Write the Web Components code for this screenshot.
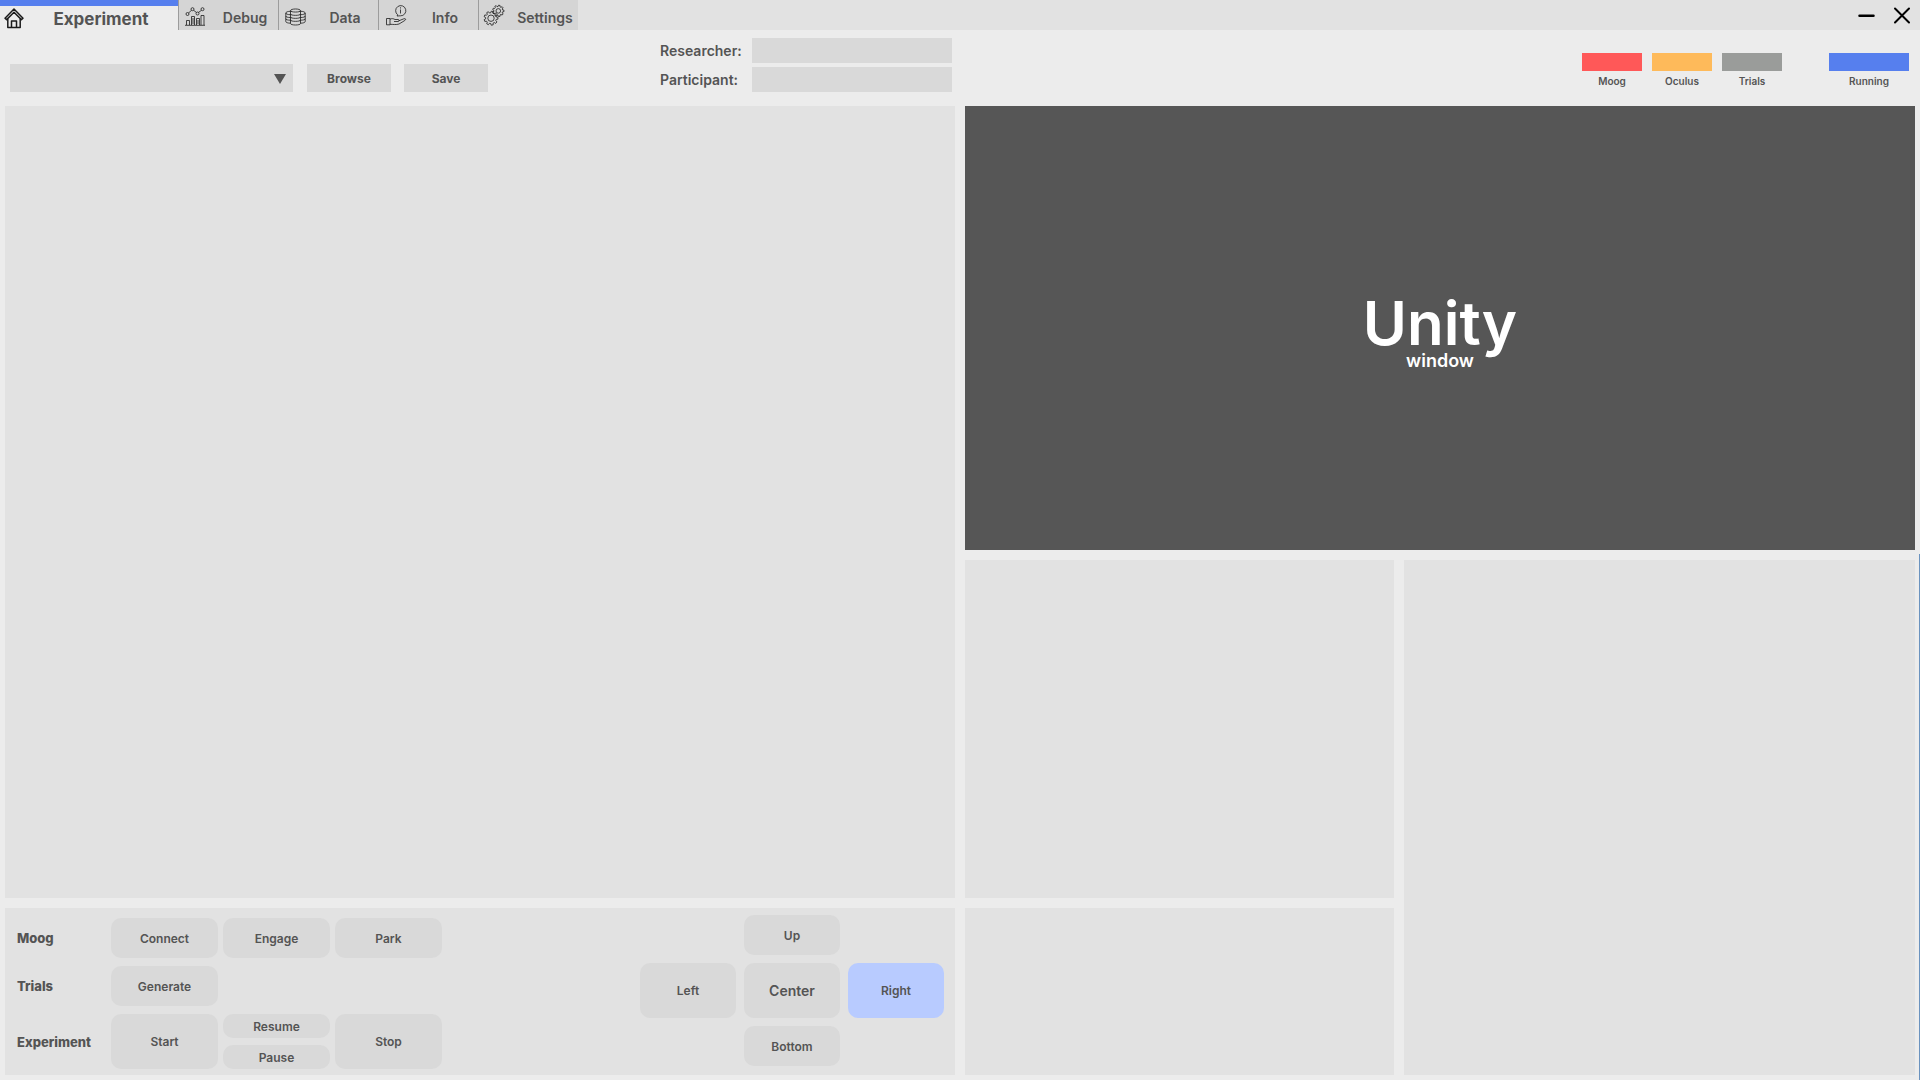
<!DOCTYPE html>
<html lang="en">
<head>
<meta charset="utf-8">
<title>Experiment</title>
<style>
html, body { margin: 0; height: 100%; }
body {
  background: #ececec;
  color: #545454;
  font-family: Inter, "Liberation Sans", sans-serif;
  font-weight: 600;
  overflow: hidden;
}
</style>
</head>
<body>
<experiment-app></experiment-app>
<script>
const define = (name, html, setup) => {
  const template = document.createElement('template');
  template.innerHTML = html;
  customElements.define(name, class extends HTMLElement {
    constructor() {
      super();
      this.attachShadow({ mode: 'open' }).append(template.content.cloneNode(true));
    }
    connectedCallback() { if (setup) setup(this, this.shadowRoot); }
  });
};

// Outline of a cog: each tooth takes one step of the circle.
const cog = (cx, cy, outer, inner, teeth) => {
  const step = 2 * Math.PI / teeth;
  const points = [];
  for (let i = 0; i < teeth; i++) {
    for (const [r, t] of [[inner, -.32], [outer, -.2], [outer, .2], [inner, .32]]) {
      const a = (i + t) * step;
      points.push((cx + r * Math.cos(a)).toFixed(2) + ' ' + (cy + r * Math.sin(a)).toFixed(2));
    }
  }
  return '<path d="M' + points.join('L') + 'Z"/>';
};

const ICONS = {
  home: '<g stroke-width="1.5" stroke-linejoin="round"><path d="M1 10.200 10 1l9 9.200-1.600 1.400L10 4.200l-7.400 7.400Z"/><path d="M3.800 10.800V19.500H16.200V10.800M7.500 19.500V13h5V19.500"/></g>',
  chart: '<g transform="translate(0 2)"><path d="M0 18.300h20M1.500 18v-4.500h3V18M6.500 18V9.500h3V18M11.500 18v-6.500h3V18M16 18V8.500h3V18M8 11v6M13 13v4"/><circle cx="2.500" cy="7" r="1.500"/><circle cx="7.500" cy="2.200" r="1.500"/><circle cx="12.500" cy="6.500" r="1.500"/><circle cx="17.500" cy="2.200" r="1.500"/><path d="M3.500 6l3-2.700M8.600 3.300l2.900 2.200M13.400 5.500l3.100-2.200"/></g>',
  data: '<g transform="translate(.5 2)"><path d="M5 3.700c0-2.300 10-2.300 10 0v12.800c0 2-10 2-10 0ZM5 3.700c0 1.800 10 1.800 10 0M5 7c0 1.800 10 1.800 10 0M5 10c0 1.800 10 1.800 10 0M5 13c0 1.800 10 1.800 10 0M5 4.300C2.500 4.300.3 5 .3 6v8.500c0 1 2.200 1.700 4.700 1.700M.3 6c0 1 2 1.700 4.700 1.700M.3 9c0 1 2 1.500 4.700 1.500M.3 11.700c0 1 2 1.500 4.700 1.500M15 4.300c2.500 0 4.700.7 4.700 1.700v8.500c0 1-2.200 1.700-4.700 1.700M19.700 6c0 1-2 1.700-4.700 1.700M19.700 9c0 1-2 1.500-4.700 1.500M19.700 11.700c0 1-2 1.500-4.700 1.500"/></g>',
  info: '<g transform="translate(1 0)"><path d="M11.700 9.800a5.100 5.100 0 1 1 2.800 1l-3.500.2ZM14.500 4.500v4M14.500 2.300v1.200M.5 13.500h3.500v6.300H.5ZM4 14.200c2-1 3.500-.5 5 .3h3c1.500 0 1.500 2 0 2H8M12.800 15.800l5-2c2-.6 2.500.7 1 1.700L13 19c-3 1-6 .3-9 .3"/></g>',
  gears: '<g transform="translate(-1 0)">' + cog(7, 13.2, 7, 5.4, 9) + cog(14.3, 5.9, 5.7, 4.4, 9) + '<circle cx="7" cy="13.200" r="3.200"/><circle cx="14.300" cy="5.900" r="2.300"/></g>'
};

define('app-icon', `
  <style>
    :host { display: block; flex: none; width: 20px; height: 21px; }
    svg { display: block; width: 100%; height: 100%; overflow: visible; fill: none; stroke: #1c1c1c; stroke-width: .8; }
  </style>
  <svg viewBox="0 0 20 21" aria-hidden="true"></svg>`,
  (host, root) => { root.querySelector('svg').innerHTML = ICONS[host.getAttribute('name')]; });

define('nav-tab', `
  <style>
    :host { display: block; width: 100px; height: 30px; }
    button {
      display: flex; align-items: flex-start; gap: 7px; box-sizing: border-box;
      width: 100%; height: 100%; margin: 0; padding: 5px 0 0 6px;
      border: 0; border-left: 1px solid #9c9c9c; background: #d5d5d5;
      color: inherit; font: inherit; font-size: 14px; line-height: 20px;
    }
    .label { flex: 1; padding-top: 3px; text-align: center; }
    :host([active]) { width: 178px; }
    :host([active]) button {
      padding: 2px 0 0 4px; gap: 0; background: #ececec;
      border-left: 0; border-top: 6px solid #567fee; font-size: 17px; font-weight: 700;
    }
    :host([active]) .label { padding-top: 1px; }
  </style>
  <button type="button"><app-icon></app-icon><span class="label"><slot></slot></span></button>`,
  (host, root) => {
    const icon = document.createElement('app-icon');
    icon.setAttribute('name', host.getAttribute('icon'));
    root.querySelector('app-icon').replaceWith(icon);
  });

define('title-bar', `
  <style>
    :host { display: flex; height: 30px; background: #e2e2e2; }
    nav { display: flex; flex: 1; }
    .window { display: flex; align-items: center; gap: 17px; padding-right: 9px; }
    button { display: flex; align-items: center; width: 18px; height: 30px; margin: 0; padding: 0; border: 0; background: none; }
    svg { display: block; width: 18px; height: 18px; stroke: #000; fill: none; stroke-linecap: round; }
  </style>
  <nav>
    <nav-tab icon="home" active>Experiment</nav-tab>
    <nav-tab icon="chart">Debug</nav-tab>
    <nav-tab icon="data">Data</nav-tab>
    <nav-tab icon="info">Info</nav-tab>
    <nav-tab icon="gears">Settings</nav-tab>
  </nav>
  <div class="window">
    <button type="button" aria-label="Minimize"><svg viewBox="0 0 18 18"><path stroke-width="2.500" d="M1.500 9.700h14"/></svg></button>
    <button type="button" aria-label="Close"><svg viewBox="0 0 18 18"><path stroke-width="2" d="M2 2.500l14 14M16 2.500l-14 14"/></svg></button>
  </div>`);

define('status-light', `
  <style>
    :host { display: block; width: 60px; text-align: center; font-size: 10px; line-height: 20px; }
    :host([wide]) { width: 80px; }
    .lamp { height: 18px; background: var(--lamp); }
  </style>
  <div class="lamp"></div><slot></slot>`);

define('tool-bar', `
  <style>
    :host { display: grid; grid-template-columns: 1fr 1fr; height: 76px; box-sizing: border-box; padding-top: 8px; }
    .left, .right { display: flex; align-items: flex-start; }
    .left { padding: 0 8px 0 10px; }
    .file { display: flex; flex: 1; padding-top: 26px; }
    .picker { position: relative; width: 283px; height: 28px; margin-right: 14px; }
    select {
      appearance: none; display: block; width: 100%; height: 100%;
      border: 0; border-radius: 0; background: #d9d9d9; font: inherit; color: inherit;
    }
    .picker svg { position: absolute; right: 7px; top: 10px; width: 12px; height: 10px; fill: #545454; pointer-events: none; }
    button {
      width: 84px; height: 28px; margin: 0 13px 0 0; padding: 2px 0 0; border: 0; background: #d9d9d9;
      color: inherit; font: inherit; font-size: 12px; line-height: 26px; font-weight: 700;
    }
    .people { display: grid; grid-template-columns: 92px 200px; grid-auto-rows: 25px; row-gap: 4px; font-size: 14px; line-height: 26px; }
    input { display: block; box-sizing: border-box; width: 100%; height: 25px; margin: 0; padding: 0 6px; border: 0; border-radius: 0; background: #d9d9d9; font: inherit; color: inherit; }
    .right { justify-content: flex-end; gap: 10px; padding: 15px 11px 0 0; }
    [wide] { margin-left: 37px; }
  </style>
  <div class="left">
    <div class="file">
      <div class="picker">
        <select aria-label="Protocol"><option></option></select>
        <svg viewBox="0 0 12 10" aria-hidden="true"><path d="M0 0h12L6 10Z"/></svg>
      </div>
      <button type="button">Browse</button>
      <button type="button">Save</button>
    </div>
    <div class="people">
      <label for="researcher">Researcher:</label><input id="researcher">
      <label for="participant">Participant:</label><input id="participant">
    </div>
  </div>
  <div class="right">
    <status-light style="--lamp:#ff5858">Moog</status-light>
    <status-light style="--lamp:#feba5a">Oculus</status-light>
    <status-light style="--lamp:#9a9c9a">Trials</status-light>
    <status-light wide style="--lamp:#567fee">Running</status-light>
  </div>`);

define('pad-button', `
  <style>
    :host { display: block; }
    button {
      display: block; width: 100%; height: 100%; margin: 0; padding: 0;
      border: 0; border-radius: 10px; background: #d9d9d9; color: inherit; font: inherit;
    }
    :host([pressed]) button { background: #b8cbff; }
  </style>
  <button type="button"><slot></slot></button>`);

define('command-table', `
  <style>
    :host { display: grid; grid-template-columns: 89px repeat(3, 107px); grid-template-rows: 40px 40px 55px; gap: 8px 5px; font-size: 12px; }
    h2 { margin: 0; align-self: center; font-size: 13px; line-height: 16px; font-weight: 800; }
    .generate { grid-column: 2 / -1; width: 107px; }
    .stack { display: grid; grid-template-rows: 1fr 1fr; gap: 7px; }
  </style>
  <h2>Moog</h2><pad-button>Connect</pad-button><pad-button>Engage</pad-button><pad-button>Park</pad-button>
  <h2>Trials</h2><pad-button class="generate">Generate</pad-button>
  <h2>Experiment</h2><pad-button>Start</pad-button>
  <div class="stack"><pad-button>Resume</pad-button><pad-button>Pause</pad-button></div>
  <pad-button>Stop</pad-button>`);

define('direction-pad', `
  <style>
    :host {
      display: grid; grid-template-columns: repeat(3, 96px); grid-template-rows: 40px 55px 40px; gap: 8px; font-size: 12px;
      grid-template-areas: ". up ." "left center right" ". bottom .";
    }
    .up { grid-area: up; } .left { grid-area: left; } .right { grid-area: right; } .bottom { grid-area: bottom; }
    .center { grid-area: center; font-size: 14px; }
  </style>
  <pad-button class="up">Up</pad-button>
  <pad-button class="left">Left</pad-button>
  <pad-button class="center">Center</pad-button>
  <pad-button class="right" pressed>Right</pad-button>
  <pad-button class="bottom">Bottom</pad-button>`);

define('control-panel', `
  <style>
    :host { display: flex; justify-content: space-between; align-items: flex-start; box-sizing: border-box; padding: 7px 11px 6px 12px; background: #e2e2e2; }
    command-table { padding-top: 3px; }
  </style>
  <command-table></command-table><direction-pad></direction-pad>`);

define('empty-panel', `<style>:host { display: block; background: #e2e2e2; }</style>`);

define('unity-view', `
  <style>
    :host { display: flex; flex-direction: column; align-items: center; justify-content: center; box-sizing: border-box; padding-top: 11px; background: #565656; color: #fff; text-align: center; }
    .name { font-size: 60px; line-height: 54px; }
    .kind { font-size: 18px; line-height: 22px; }
  </style>
  <div class="name">Unity</div><div class="kind">window</div>`);

define('experiment-app', `
  <style>
    :host { display: flex; flex-direction: column; height: 100vh; }
    main { position: relative; flex: 1; display: grid; grid-template-columns: 1fr 1fr; gap: 10px; padding: 0 5px 5px; min-height: 0; }
    main::after { content: ""; position: absolute; right: 0; top: 46%; bottom: 0; width: 1px; background: #6b93bf; }
    .left { display: grid; grid-template-rows: 1fr 167px; gap: 10px; }
    .right {
      display: grid; gap: 10px; grid-template-columns: 429fr 511fr; grid-template-rows: 444fr 338fr 167px;
      grid-template-areas: "unity unity" "middle side" "bottom side";
    }
    unity-view { grid-area: unity; }
    .middle { grid-area: middle; } .side { grid-area: side; } .bottom { grid-area: bottom; }
  </style>
  <title-bar></title-bar>
  <tool-bar></tool-bar>
  <main>
    <div class="left"><empty-panel></empty-panel><control-panel></control-panel></div>
    <div class="right">
      <unity-view></unity-view>
      <empty-panel class="middle"></empty-panel>
      <empty-panel class="side"></empty-panel>
      <empty-panel class="bottom"></empty-panel>
    </div>
  </main>`);
</script>
</body>
</html>
